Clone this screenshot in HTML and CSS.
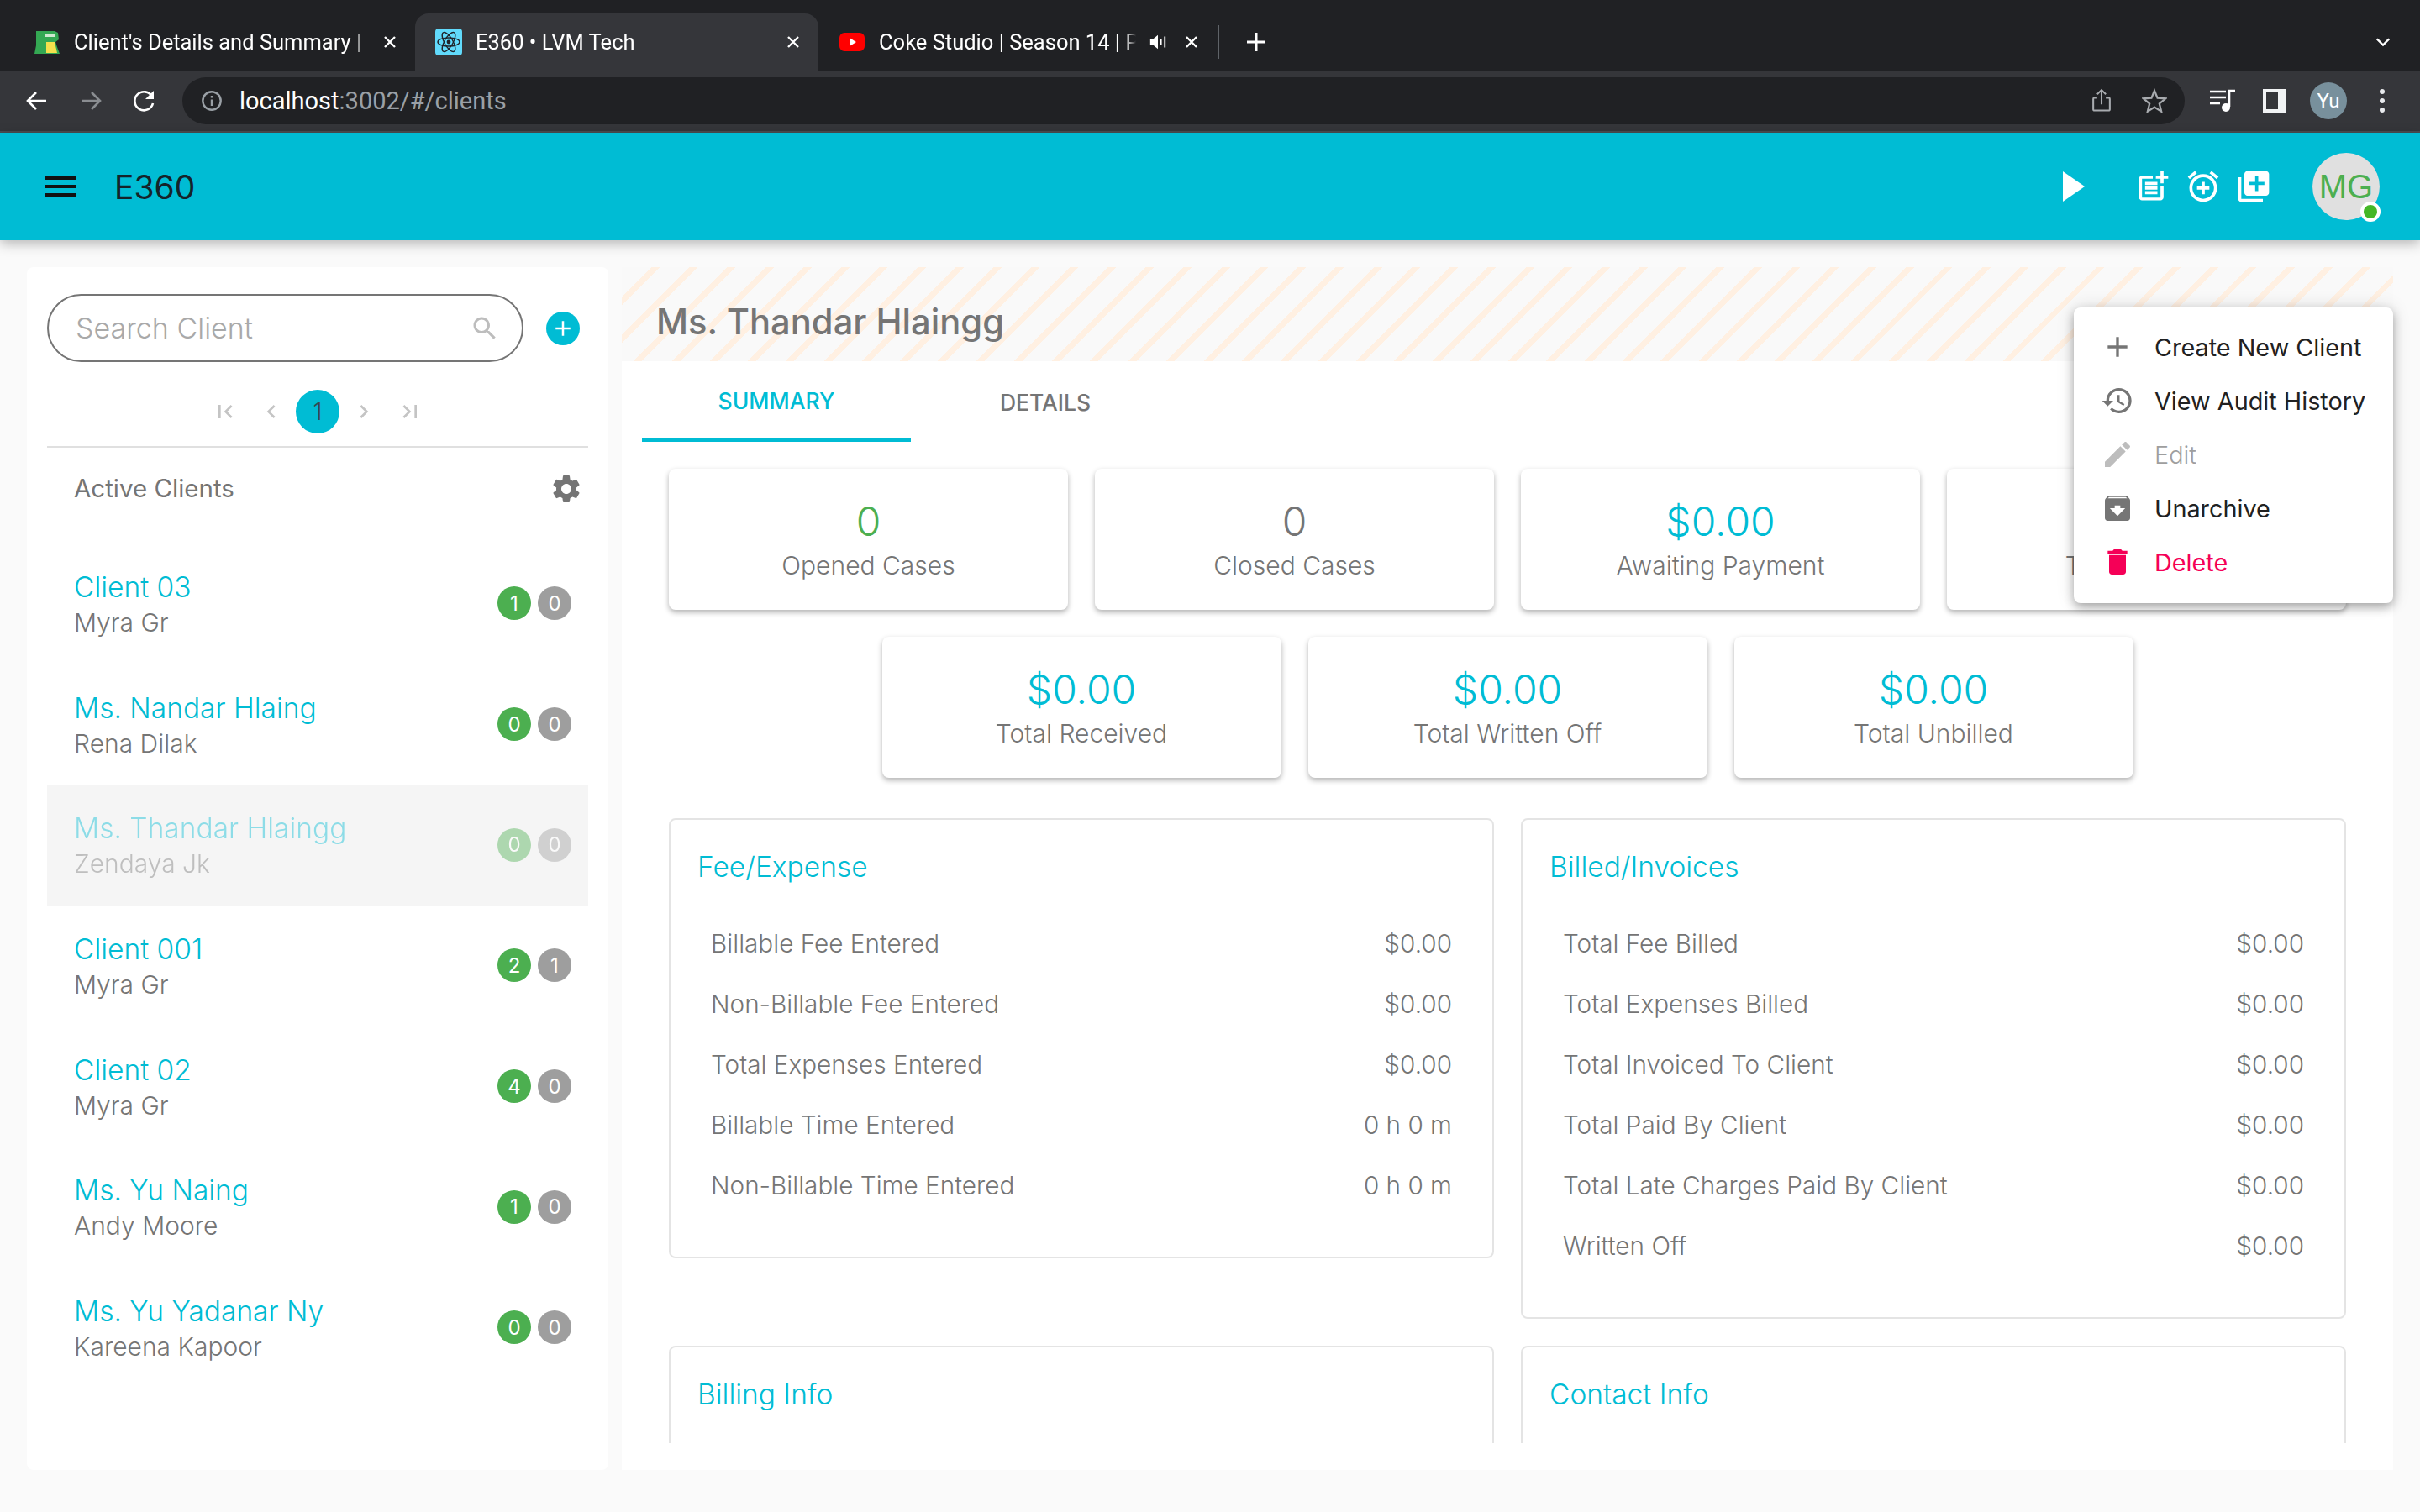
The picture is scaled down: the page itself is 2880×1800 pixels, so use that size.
FILE: index.html
```html
<!DOCTYPE html>
<html lang="en">
<head>
  <meta charset="UTF-8" />
  <title>E360 - LVM Tech</title>
  <link rel="stylesheet" href="styles.css">
</head>
<body>
  <!-- browser chrome -->
  <div class="tabstrip">
    <div class="tab">
      <svg class="favicon" viewBox="0 0 32 32"><path fill="#34a853" d="M3 3h22l4 2 1 8-4 3 2 6 3 8H1l2-10z"/><path fill="#f4e04d" d="M15 16h10l3 13H15z"/><path fill="#cfe8d0" d="M13 7h12v3H13z"/></svg>
      <span class="tab-title">Client's Details and Summary | LVM Tech</span>
      <svg class="tab-x" viewBox="0 0 16 16"><path d="M2 2l12 12M14 2L2 14"/></svg>
    </div>
    <div class="tab active">
      <svg class="favicon" viewBox="0 0 32 32"><rect width="32" height="32" rx="4" fill="#61dafb"/><g fill="none" stroke="#20232a" stroke-width="1.4"><ellipse cx="16" cy="16" rx="13" ry="5"/><ellipse cx="16" cy="16" rx="13" ry="5" transform="rotate(60 16 16)"/><ellipse cx="16" cy="16" rx="13" ry="5" transform="rotate(120 16 16)"/></g><circle cx="16" cy="16" r="2.4" fill="#20232a"/></svg>
      <span class="tab-title">E360 • LVM Tech</span>
      <svg class="tab-x" viewBox="0 0 16 16"><path d="M2 2l12 12M14 2L2 14"/></svg>
    </div>
    <div class="tab">
      <svg class="favicon" viewBox="0 0 32 32"><rect x="1" y="5" width="30" height="22" rx="6" fill="#ff0000"/><path fill="#fff" d="M13 11l8 5-8 5z"/></svg>
      <span class="tab-title short">Coke Studio | Season 14 | Pepsi</span>
      <svg class="tab-audio" viewBox="0 0 24 24"><path fill="#fff" d="M2 8h4l6-5v18l-6-5H2z"/><path d="M16 8v8M21 5v14" stroke="#fff" stroke-width="2"/></svg>
      <svg class="tab-x" viewBox="0 0 16 16"><path d="M2 2l12 12M14 2L2 14"/></svg>
    </div>
    <div class="tab-sep"></div>
    <svg class="tab-new" viewBox="0 0 24 24"><path d="M12 1v22M1 12h22"/></svg>
    <svg class="tab-list" viewBox="0 0 20 12"><path d="M2 2l8 8 8-8"/></svg>
  </div>
  <div class="toolbar">
    <svg class="tool-ico" viewBox="0 0 28 28"><path d="M25 14H4M13 4L3 14l10 10"/></svg>
    <svg class="tool-ico dim" viewBox="0 0 28 28"><path d="M3 14h21M15 4l10 10-10 10"/></svg>
    <svg class="tool-ico" viewBox="0 0 28 28"><path d="M23 9a11 11 0 1 0 1 8"/><path class="solid" d="M25 2v10H15z"/></svg>
    <div class="omnibox">
      <svg class="info" viewBox="0 0 28 28"><circle cx="14" cy="14" r="11.5"/><path d="M14 12.5v8M14 7.5v2.6"/></svg>
      <span class="url"><b>localhost</b>:3002/#/clients</span>
      <svg class="omni-ico" viewBox="0 0 28 32"><path d="M8 12H4a1.5 1.5 0 0 0-1.5 1.5V28A1.5 1.5 0 0 0 4 29.5h20a1.5 1.5 0 0 0 1.5-1.5V13.5A1.5 1.5 0 0 0 24 12h-4M14 21V2M8 7l6-6 6 6"/></svg>
      <svg class="omni-ico star" viewBox="0 0 32 32"><path d="M16 3l3.8 9.4 10.2.7-7.8 6.5 2.5 9.9L16 24.1l-8.7 5.4 2.5-9.9L2 13.1l10.2-.7z"/></svg>
    </div>
    <svg class="tool-ico media" viewBox="0 0 32 28"><path d="M1 3h19M1 10h19M1 17h12"/><path d="M24 21V2h7" /><circle class="solid" cx="20" cy="22" r="5"/></svg>
    <svg class="panel" viewBox="0 0 28 28"><path fill="#f1f3f4" fill-rule="evenodd" d="M0 0h28v28H0zM4 4v20h14V4z"/></svg>
    <div class="profile">Yu</div>
    <svg class="kebab" viewBox="0 0 8 30"><circle cx="4" cy="4" r="3"/><circle cx="4" cy="15" r="3"/><circle cx="4" cy="26" r="3"/></svg>
  </div>

  <!-- app bar -->
  <header class="appbar">
    <svg class="menu-ico" viewBox="3 6 18 12"><path d="M3 18h18v-2H3v2zm0-5h18v-2H3v2zm0-7v2h18V6H3z"/></svg>
    <div class="brand">E360</div>
    <div class="appbar-actions">
      <svg class="act play" viewBox="0 0 26 36"><path d="M0 0l26 18L0 36z"/></svg>
      <svg class="act post" viewBox="0 0 24 24"><path d="M17 19.22H5V7h7V5H5c-1.1 0-2 .9-2 2v12c0 1.1.9 2 2 2h12c1.1 0 2-.9 2-2v-7h-2v7.22zM19 2h-2v3h-3c.01.01 0 2 0 2h3v2.99c.01.01 2 0 2 0V7h3V5h-3V2zM7 9h8v2H7zM7 12v2h8v-2h-3zM7 15h8v2H7z"/></svg>
      <svg class="act" viewBox="0 0 24 24"><path d="M7.88 3.39L6.6 1.86 2 5.71l1.29 1.53 4.59-3.85zM22 5.72l-4.6-3.86-1.29 1.53 4.6 3.86L22 5.72zM12 4c-4.97 0-9 4.03-9 9s4.02 9 9 9c4.97 0 9-4.03 9-9s-4.03-9-9-9zm0 16c-3.87 0-7-3.13-7-7s3.13-7 7-7 7 3.13 7 7-3.13 7-7 7zm1-11h-2v3H8v2h3v3h2v-3h3v-2h-3V9z"/></svg>
      <svg class="act" viewBox="0 0 24 24"><path d="M4 6H2v14c0 1.1.9 2 2 2h14v-2H4V6zm16-4H8c-1.1 0-2 .9-2 2v12c0 1.1.9 2 2 2h12c1.1 0 2-.9 2-2V4c0-1.1-.9-2-2-2zm-1 9h-4v4h-2v-4H9V9h4V5h2v4h4v2z"/></svg>
      <div class="avatar">MG<span class="online"></span></div>
    </div>
  </header>

  <div class="shell">
    <aside class="sidebar">
      <div class="search-row">
        <div class="search">
          <span class="search-text">Search Client</span>
          <svg class="search-ico" viewBox="0 0 24 24"><path d="M15.5 14h-.79l-.28-.27C15.41 12.59 16 11.11 16 9.5 16 5.91 13.09 3 9.5 3S3 5.91 3 9.5 5.91 16 9.5 16c1.61 0 3.09-.59 4.23-1.57l.27.28v.79l5 4.99L20.49 19l-4.99-5zm-6 0C7.01 14 5 11.99 5 9.5S7.01 5 9.5 5 14 7.01 14 9.5 11.99 14 9.5 14z"/></svg>
        </div>
        <div class="add-btn"><svg viewBox="0 0 24 24"><path d="M19 13h-6v6h-2v-6H5v-2h6V5h2v6h6v2z"/></svg></div>
      </div>
      <div class="pager">
        <svg viewBox="0 0 24 24"><path d="M18.41 16.59L13.82 12l4.59-4.59L17 6l-6 6 6 6zM6 6h2v12H6z"/></svg>
        <svg viewBox="0 0 24 24"><path d="M15.41 7.41L14 6l-6 6 6 6 1.41-1.41L10.83 12z"/></svg>
        <span class="page-on">1</span>
        <svg viewBox="0 0 24 24"><path d="M10 6L8.59 7.41 13.17 12l-4.58 4.59L10 18l6-6z"/></svg>
        <svg viewBox="0 0 24 24"><path d="M5.59 7.41L10.18 12l-4.59 4.59L7 18l6-6-6-6zM16 6h2v12h-2z"/></svg>
      </div>
      <div class="list-head">
        <span>Active Clients</span>
        <svg viewBox="0 0 24 24"><path d="M19.14 12.94c.04-.3.06-.61.06-.94 0-.32-.02-.64-.07-.94l2.03-1.58c.18-.14.23-.41.12-.61l-1.92-3.32c-.12-.22-.37-.29-.59-.22l-2.39.96c-.5-.38-1.03-.7-1.62-.94l-.36-2.54c-.04-.24-.24-.41-.48-.41h-3.84c-.24 0-.43.17-.47.41l-.36 2.54c-.59.24-1.13.57-1.62.94l-2.39-.96c-.22-.08-.47 0-.59.22L2.74 8.87c-.12.21-.08.47.12.61l2.03 1.58c-.05.3-.09.63-.09.94s.02.64.07.94l-2.03 1.58c-.18.14-.23.41-.12.61l1.92 3.32c.12.22.37.29.59.22l2.39-.96c.5.38 1.03.7 1.62.94l.36 2.54c.05.24.24.41.48.41h3.84c.24 0 .44-.17.47-.41l.36-2.54c.59-.24 1.13-.56 1.62-.94l2.39.96c.22.08.47 0 .59-.22l1.92-3.32c.12-.22.07-.47-.12-.61l-2.01-1.58zM12 15.6c-1.98 0-3.6-1.62-3.6-3.6s1.62-3.6 3.6-3.6 3.6 1.62 3.6 3.6-1.62 3.6-3.6 3.6z"/></svg>
      </div>
      <div class="client">
        <div class="client-info"><div class="client-name">Client 03</div><div class="client-sub">Myra Gr</div></div>
        <span class="badge green">1</span><span class="badge grey">0</span>
      </div>
      <div class="client">
        <div class="client-info"><div class="client-name">Ms. Nandar Hlaing</div><div class="client-sub">Rena Dilak</div></div>
        <span class="badge green">0</span><span class="badge grey">0</span>
      </div>
      <div class="client selected">
        <div class="client-info"><div class="client-name">Ms. Thandar Hlaingg</div><div class="client-sub">Zendaya Jk</div></div>
        <span class="badge green">0</span><span class="badge grey">0</span>
      </div>
      <div class="client">
        <div class="client-info"><div class="client-name">Client 001</div><div class="client-sub">Myra Gr</div></div>
        <span class="badge green">2</span><span class="badge grey">1</span>
      </div>
      <div class="client">
        <div class="client-info"><div class="client-name">Client 02</div><div class="client-sub">Myra Gr</div></div>
        <span class="badge green">4</span><span class="badge grey">0</span>
      </div>
      <div class="client">
        <div class="client-info"><div class="client-name">Ms. Yu Naing</div><div class="client-sub">Andy Moore</div></div>
        <span class="badge green">1</span><span class="badge grey">0</span>
      </div>
      <div class="client">
        <div class="client-info"><div class="client-name">Ms. Yu Yadanar Ny</div><div class="client-sub">Kareena Kapoor</div></div>
        <span class="badge green">0</span><span class="badge grey">0</span>
      </div>
    </aside>

    <main class="detail">
      <div class="detail-head">Ms. Thandar Hlaingg</div>
      <div class="tabs">
        <div class="tabs-item on">SUMMARY</div>
        <div class="tabs-item">DETAILS</div>
      </div>
      <div class="scroll">
        <div class="stat-row">
          <div class="stat"><div class="stat-val green-t">0</div><div class="stat-label">Opened Cases</div></div>
          <div class="stat"><div class="stat-val grey-t">0</div><div class="stat-label">Closed Cases</div></div>
          <div class="stat"><div class="stat-val">$0.00</div><div class="stat-label">Awaiting Payment</div></div>
          <div class="stat"><div class="stat-val">$0.00</div><div class="stat-label">Total Invoiced</div></div>
        </div>
        <div class="stat-row">
          <div class="stat"><div class="stat-val">$0.00</div><div class="stat-label">Total Received</div></div>
          <div class="stat"><div class="stat-val">$0.00</div><div class="stat-label">Total Written Off</div></div>
          <div class="stat"><div class="stat-val">$0.00</div><div class="stat-label">Total Unbilled</div></div>
        </div>
        <div class="boxes">
          <section class="box">
            <h3>Fee/Expense</h3>
            <div class="line"><span>Billable Fee Entered</span><span>$0.00</span></div>
            <div class="line"><span>Non-Billable Fee Entered</span><span>$0.00</span></div>
            <div class="line"><span>Total Expenses Entered</span><span>$0.00</span></div>
            <div class="line"><span>Billable Time Entered</span><span>0 h 0 m</span></div>
            <div class="line"><span>Non-Billable Time Entered</span><span>0 h 0 m</span></div>
          </section>
          <section class="box">
            <h3>Billed/Invoices</h3>
            <div class="line"><span>Total Fee Billed</span><span>$0.00</span></div>
            <div class="line"><span>Total Expenses Billed</span><span>$0.00</span></div>
            <div class="line"><span>Total Invoiced To Client</span><span>$0.00</span></div>
            <div class="line"><span>Total Paid By Client</span><span>$0.00</span></div>
            <div class="line"><span>Total Late Charges Paid By Client</span><span>$0.00</span></div>
            <div class="line"><span>Written Off</span><span>$0.00</span></div>
          </section>
          <section class="box tall">
            <h3>Billing Info</h3>
          </section>
          <section class="box tall">
            <h3>Contact Info</h3>
          </section>
        </div>
      </div>

      <!-- open actions menu -->
      <div class="menu">
        <div class="menu-item"><svg viewBox="0 0 24 24"><path d="M19 13h-6v6h-2v-6H5v-2h6V5h2v6h6v2z"/></svg>Create New Client</div>
        <div class="menu-item"><svg viewBox="0 0 24 24"><path d="M13 3c-4.97 0-9 4.03-9 9H1l3.89 3.89.07.14L9 12H6c0-3.87 3.13-7 7-7s7 3.13 7 7-3.13 7-7 7c-1.93 0-3.68-.79-4.94-2.06l-1.42 1.42C8.27 19.99 10.51 21 13 21c4.97 0 9-4.03 9-9s-4.03-9-9-9zm-1 5v5l4.28 2.54.72-1.21-3.5-2.08V8H12z"/></svg>View Audit History</div>
        <div class="menu-item off"><svg viewBox="0 0 24 24"><path d="M3 17.25V21h3.75L17.81 9.94l-3.75-3.75L3 17.25zM20.71 7.04c.39-.39.39-1.02 0-1.41l-2.34-2.34c-.39-.39-1.02-.39-1.41 0l-1.83 1.83 3.75 3.75 1.83-1.83z"/></svg>Edit</div>
        <div class="menu-item"><svg viewBox="0 0 24 24"><path d="M20.54 5.23l-1.39-1.68C18.88 3.21 18.47 3 18 3H6c-.47 0-.88.21-1.16.55L3.46 5.23C3.17 5.57 3 6.02 3 6.5V19c0 1.1.9 2 2 2h14c1.1 0 2-.9 2-2V6.5c0-.48-.17-.93-.46-1.27zM12 17.5L6.5 12H10v-2h4v2h3.5L12 17.5zM5.12 5l.81-1h12l.94 1H5.12z"/></svg>Unarchive</div>
        <div class="menu-item danger"><svg viewBox="0 0 24 24"><path d="M6 19c0 1.1.9 2 2 2h8c1.1 0 2-.9 2-2V7H6v12zM19 4h-3.5l-1-1h-5l-1 1H5v2h14V4z"/></svg>Delete</div>
      </div>
    </main>
  </div>
</body>
</html>
```

FILE: styles.css
```css
* {
  box-sizing: border-box;
}
html, body {
  margin: 0;
  height: 100%;
}
body {
  display: flex;
  flex-direction: column;
  height: 1800px;
  overflow: hidden;
  background: #fafafa;
  color: #757575;
  font-family: Inter, 'Noto Sans', sans-serif;
}

/* browser chrome */
.tabstrip {
  height: 84px;
  flex: none;
  display: flex;
  align-items: flex-end;
  padding-left: 14px;
  background: #202124;
  color: #fff;
  font-family: Roboto, 'Liberation Sans', sans-serif;
}
.tab {
  width: 480px;
  height: 68px;
  padding: 0 22px 0 24px;
  display: flex;
  align-items: center;
  border-radius: 16px 16px 0 0;
}
.tab:first-child {
  padding-left: 26px;
}
.tab.active {
  background: #35363a;
}
.favicon {
  width: 32px;
  height: 32px;
  flex: none;
  margin-right: 16px;
}
.tab-title {
  flex: 1;
  font-size: 25.5px;
  white-space: nowrap;
  overflow: hidden;
  -webkit-mask-image: linear-gradient(to right, #000 96%, transparent);
  mask-image: linear-gradient(to right, #000 96%, transparent);
}
.tab-title.short {
  flex: none;
  width: 306px;
}
.tab-audio {
  width: 22px;
  height: 22px;
  margin-left: 15px;
  flex: none;
}
.tab-x {
  width: 16px;
  height: 16px;
  margin-left: 21px;
  flex: none;
  fill: none;
  stroke: #fff;
  stroke-width: 2.4;
}
.tab-sep {
  width: 2px;
  height: 40px;
  margin: 0 0 14px -5px;
  background: #5f6368;
}
.tab-new {
  width: 24px;
  height: 24px;
  margin: 0 0 22px 32px;
  fill: none;
  stroke: #fff;
  stroke-width: 3;
}
.tab-list {
  width: 18px;
  height: 12px;
  margin: 0 35px 28px auto;
  fill: none;
  stroke: #fff;
  stroke-width: 2.6;
}

.toolbar {
  height: 74px;
  flex: none;
  display: flex;
  align-items: center;
  padding: 0 0 0 30px;
  background: #35363a;
  border-bottom: 2px solid #4a4d51;
}
.tool-ico {
  width: 28px;
  height: 28px;
  margin-right: 36px;
  flex: none;
  fill: none;
  stroke: #fff;
  stroke-width: 2.6;
}
.tool-ico.dim {
  stroke: #8a8d91;
}
.tool-ico .solid {
  fill: #fff;
  stroke: none;
}
.omnibox {
  width: 2383px;
  height: 56px;
  margin-left: -5px;
  padding: 0 0 0 22px;
  display: flex;
  align-items: center;
  flex: none;
  border-radius: 28px;
  background: #202124;
}
.info {
  width: 26px;
  height: 26px;
  flex: none;
  fill: none;
  stroke: #9aa0a6;
  stroke-width: 2.6;
}
.url {
  flex: 1;
  margin-left: 20px;
  font-family: Roboto, 'Liberation Sans', sans-serif;
  font-size: 29px;
  color: #9aa0a6;
}
.url b {
  font-weight: 400;
  color: #fff;
}
.omni-ico {
  width: 24px;
  height: 32px;
  margin-right: 36px;
  flex: none;
  fill: none;
  stroke: #a8abaf;
  stroke-width: 2.4;
}
.omni-ico.star {
  width: 30px;
  height: 30px;
  margin-right: 21px;
}
.tool-ico.media {
  width: 32px;
  margin: 0 0 0 29px;
}
.panel {
  width: 28px;
  height: 28px;
  margin-left: 32px;
  flex: none;
}
.profile {
  width: 44px;
  height: 44px;
  margin-left: 28px;
  flex: none;
  display: flex;
  align-items: center;
  justify-content: center;
  border-radius: 50%;
  background: #78909c;
  color: #fff;
  font-family: Roboto, sans-serif;
  font-size: 24px;
}
.kebab {
  width: 8px;
  height: 30px;
  margin-left: 38px;
  flex: none;
  fill: #e8eaed;
}

/* app bar */
.appbar {
  height: 128px;
  flex: none;
  display: flex;
  align-items: center;
  padding: 0 48px 0 54px;
  background: #00bcd4;
  box-shadow: 0 4px 14px rgba(0,0,0,0.28);
  position: relative;
  z-index: 2;
}
.menu-ico {
  width: 36px;
  height: 24px;
  fill: #111;
}
.brand {
  margin-left: 46px;
  font-size: 39px;
  color: #15232a;
}
.appbar-actions {
  margin-left: auto;
  display: flex;
  align-items: center;
}
.act {
  width: 44px;
  height: 44px;
  margin-left: 16px;
  fill: #fff;
}
.act.play {
  width: 28px;
  height: 36px;
  margin-right: 42px;
}
.avatar {
  width: 80px;
  height: 80px;
  margin-left: 48px;
  position: relative;
  display: flex;
  align-items: center;
  justify-content: center;
  border-radius: 50%;
  background: #e0e0e0;
  color: #4caf50;
  font-family: 'Liberation Sans', sans-serif;
  font-size: 40px;
}
.online {
  position: absolute;
  right: -1px;
  bottom: -2px;
  width: 24px;
  height: 24px;
  border: 4px solid #fff;
  border-radius: 50%;
  background: #44b727;
}

/* page */
.shell {
  flex: 1;
  min-height: 0;
  display: flex;
  gap: 16px;
  padding: 32px 32px 50px;
}
.sidebar {
  width: 692px;
  flex: none;
  padding: 32px 24px 0;
  border-radius: 8px;
  background: #fff;
}
.search-row {
  display: flex;
  align-items: center;
}
.search {
  width: 567px;
  height: 81px;
  padding: 0 26px 0 32px;
  display: flex;
  align-items: center;
  border: 2px solid #757575;
  border-radius: 41px;
}
.search-text {
  flex: 1;
  font-size: 34px;
  color: #a9a9a9;
  font-weight: 300;
}
.search-ico {
  width: 36px;
  height: 36px;
  fill: #bdbdbd;
}
.add-btn {
  width: 40px;
  height: 40px;
  margin-left: 27px;
  padding: 5px;
  border-radius: 50%;
  background: #00bcd4;
}
.add-btn svg {
  display: block;
  fill: #fff;
}
.pager {
  height: 102px;
  padding-top: 18px;
  display: flex;
  align-items: center;
  justify-content: center;
  border-bottom: 2px solid #e0e0e0;
}
.pager svg {
  width: 32px;
  height: 32px;
  margin: 0 11.5px;
  fill: #c4c4c4;
}
.page-on {
  width: 52px;
  height: 52px;
  margin: 0 1.5px;
  display: flex;
  align-items: center;
  justify-content: center;
  border-radius: 50%;
  background: #00bcd4;
  font-size: 28px;
  font-weight: 300;
  color: #37474f;
}
.list-head {
  height: 96px;
  padding: 0 6px 0 32px;
  margin-bottom: 18px;
  display: flex;
  align-items: center;
  justify-content: space-between;
  font-size: 29.5px;
}
.list-head svg {
  width: 40px;
  height: 40px;
  margin-top: 2px;
  fill: #757575;
}
.client {
  height: 143.7px;
  padding: 0 20px 0 32px;
  display: flex;
  align-items: center;
}
.client.selected {
  background: #f5f5f5;
}
.client.selected > * {
  opacity: 0.42;
}
.client-info {
  flex: 1;
}
.client-name {
  font-size: 33.5px;
  font-weight: 300;
  color: #00bcd4;
  line-height: 44px;
}
.client-sub {
  font-size: 30px;
  font-weight: 300;
  line-height: 40px;
}
.badge {
  width: 40px;
  height: 40px;
  margin: 0 0 1px 8px;
  display: flex;
  align-items: center;
  justify-content: center;
  border-radius: 50%;
  color: #fff;
  font-size: 24px;
}
.badge.green {
  background: #4caf50;
}
.badge.grey {
  background: #9e9e9e;
}

/* right panel */
.detail {
  flex: 1;
  min-width: 0;
  position: relative;
  display: flex;
  flex-direction: column;
  background: #fff;
}
.detail-head {
  height: 112px;
  flex: none;
  padding: 18px 0 0 41px;
  display: flex;
  align-items: center;
  font-size: 41.7px;
  font-weight: 500;
  background: repeating-linear-gradient(135deg, #f9f9f9 0, #f9f9f9 25px, #fff0e2 25px, #fff0e2 32px);
}
.tabs {
  height: 96px;
  flex: none;
  display: flex;
  padding-left: 24px;
}
.tabs-item {
  width: 320px;
  padding-top: 2px;
  display: flex;
  align-items: center;
  justify-content: center;
  font-size: 26.5px;
  font-weight: 500;
}
.tabs-item.on {
  color: #00bcd4;
  border-bottom: 4px solid #00bcd4;
}
.scroll {
  height: 1192px;
  flex: none;
  margin-bottom: 32px;
  padding: 32px 56px 0;
  overflow: hidden;
}
.stat-row {
  display: flex;
  justify-content: center;
  gap: 32px;
  margin-bottom: 32px;
}
.stat {
  width: 475px;
  height: 168px;
  padding-top: 34px;
  flex: none;
  text-align: center;
  border-radius: 8px;
  background: #fff;
  box-shadow: 0 3px 6px rgba(0,0,0,0.3);
}
.stat-val {
  font-size: 48px;
  font-weight: 300;
  line-height: 58px;
  color: #00bcd4;
}
.stat-val.green-t {
  color: #4caf50;
}
.stat-val.grey-t {
  color: #757575;
}
.stat-label {
  font-size: 30px;
  font-weight: 300;
  line-height: 46px;
}
.boxes {
  margin-top: 48px;
  display: grid;
  grid-template-columns: 982px 982px;
  gap: 32px;
  align-items: start;
}
.box {
  padding: 32px 32px 48px;
  border: 2px solid #e4e4e4;
  border-radius: 8px;
}
.box.tall {
  height: 400px;
}
.box h3 {
  margin: 0 0 31px;
  font-size: 33.5px;
  font-weight: 300;
  line-height: 48px;
  color: #00bcd4;
}
.line {
  height: 72px;
  padding: 0 16px;
  display: flex;
  align-items: center;
  justify-content: space-between;
  font-size: 29.7px;
  font-weight: 300;
}
.box .line:last-child {
  margin-bottom: 1px;
}

/* actions menu */
.menu {
  position: absolute;
  top: 48px;
  right: 0;
  width: 380px;
  height: 352px;
  padding: 15px 0;
  border-radius: 8px;
  background: #fff;
  box-shadow: 0 5px 12px rgba(0,0,0,0.3), 0 0 22px rgba(0,0,0,0.12);
}
.menu-item {
  height: 64px;
  padding-left: 32px;
  display: flex;
  align-items: center;
  font-size: 28.8px;
  color: #212121;
}
.menu-item svg {
  width: 40px;
  height: 40px;
  margin-right: 24px;
  fill: #757575;
}
.menu-item.off {
  color: #9e9e9e;
  font-weight: 300;
}
.menu-item.off svg {
  fill: #bdbdbd;
}
.menu-item.danger {
  color: #f50057;
}
.menu-item.danger svg {
  fill: #f50057;
}
```
